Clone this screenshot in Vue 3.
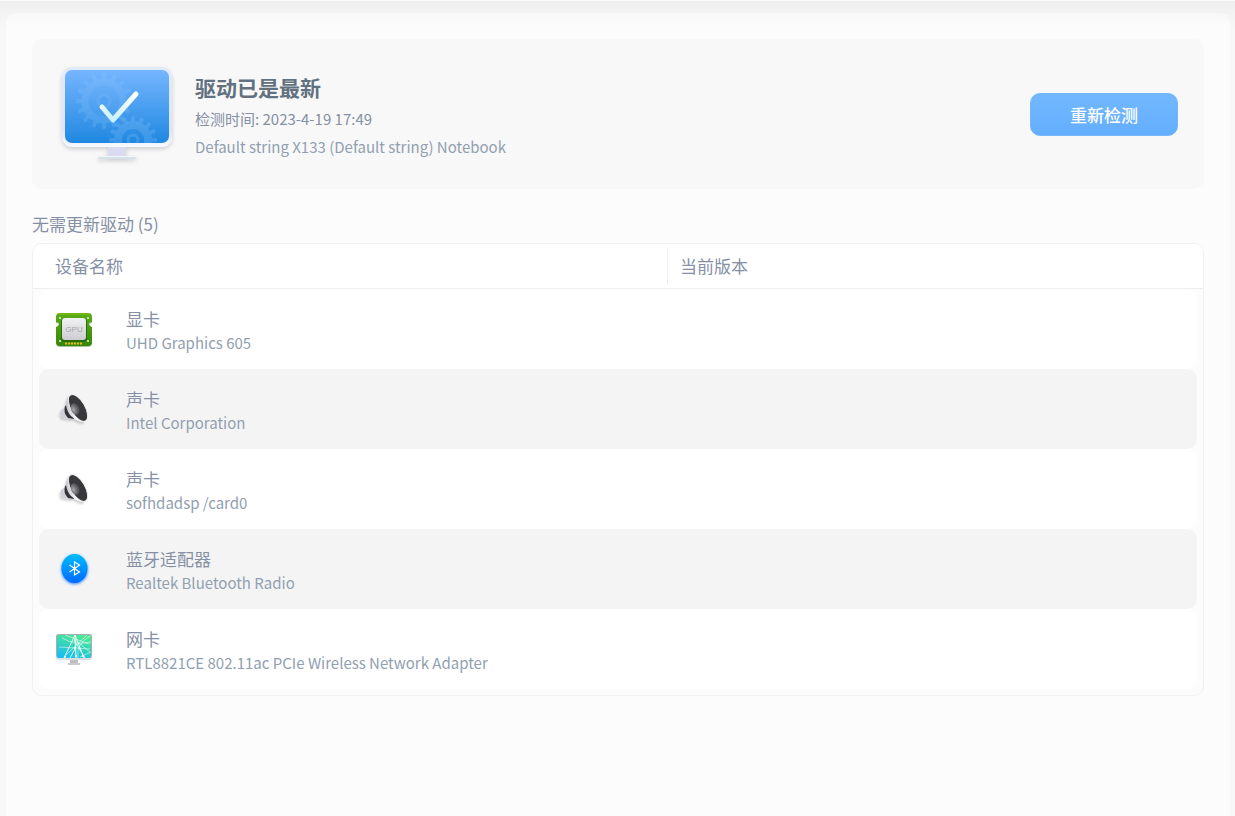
<script setup>
import { ref } from 'vue'

const checkedAt = ref('2023-4-19 17:49')
const computer = 'Default string X133 (Default string) Notebook'

const drivers = [
  { id: 1, icon: 'gpu', type: '显卡', name: 'UHD Graphics 605', version: '' },
  { id: 2, icon: 'audio', type: '声卡', name: 'Intel Corporation', version: '' },
  { id: 3, icon: 'audio', type: '声卡', name: 'sofhdadsp /card0', version: '' },
  { id: 4, icon: 'bluetooth', type: '蓝牙适配器', name: 'Realtek Bluetooth Radio', version: '' },
  {
    id: 5,
    icon: 'network',
    type: '网卡',
    name: 'RTL8821CE 802.11ac PCIe Wireless Network Adapter',
    version: '',
  },
]

const teeth = Array.from({ length: 16 }, (_, i) => i * 22.5)

const checkAgain = () => {
  const now = new Date()
  const minutes = String(now.getMinutes()).padStart(2, '0')
  checkedAt.value = `${now.getFullYear()}-${now.getMonth() + 1}-${now.getDate()} ${now.getHours()}:${minutes}`
}
</script>

<template>
  <div class="window">
    <main class="page">
      <section class="summary">
        <svg class="monitor" viewBox="0 0 124 106" aria-hidden="true">
          <defs>
            <linearGradient id="screen" x1="0" y1="0" x2="0" y2="1">
              <stop offset="0" stop-color="#76b5ff" />
              <stop offset="1" stop-color="#1f88e0" />
            </linearGradient>
            <linearGradient id="frame" x1="0" y1="0" x2="0" y2="1">
              <stop offset="0" stop-color="#e1ebfc" />
              <stop offset="0.8" stop-color="#dce5fc" />
              <stop offset="1" stop-color="#f8faff" />
            </linearGradient>
            <linearGradient id="tick" x1="0" y1="0" x2="0" y2="1">
              <stop offset="0" stop-color="#ffffff" />
              <stop offset="1" stop-color="#c9efff" />
            </linearGradient>
            <filter id="shade" x="-20%" y="-20%" width="140%" height="140%">
              <feDropShadow dx="0" dy="2" stdDeviation="2" flood-color="#000" flood-opacity="0.18" />
            </filter>
            <clipPath id="glass"><rect x="10" y="7" width="104" height="73" rx="7" /></clipPath>
          </defs>
          <g filter="url(#shade)">
            <rect x="53" y="83" width="18" height="12" fill="#d9dcf3" />
            <rect x="43" y="93" width="38" height="3" rx="1" fill="#f2f6fb" />
            <rect x="7" y="4" width="110" height="80" rx="10" fill="url(#frame)" />
          </g>
          <rect x="53" y="84" width="18" height="9" fill="#d9dbf1" />
          <rect x="43" y="94" width="38" height="2" rx="1" fill="#d5e1ea" />
          <rect x="10" y="7" width="104" height="73" rx="7" fill="url(#screen)" />
          <g clip-path="url(#glass)" fill="none" stroke="#9acbff">
            <g transform="translate(49 38)" opacity="0.2">
              <circle r="19" stroke-width="7" />
              <circle r="11" stroke-width="9" opacity="0.4" />
              <circle r="6" stroke-width="3" />
              <rect
                v-for="angle in teeth"
                :key="angle"
                x="-2"
                y="-28"
                width="4"
                height="6"
                rx="1"
                fill="#9acbff"
                stroke="none"
                :transform="`rotate(${angle})`"
              />
            </g>
            <g transform="translate(78 77)" opacity="0.22">
              <circle r="15" stroke-width="8" />
              <circle r="5" stroke-width="3" />
              <rect
                v-for="angle in teeth"
                :key="angle"
                x="-2"
                y="-24"
                width="4"
                height="6"
                rx="1"
                fill="#9acbff"
                stroke="none"
                :transform="`rotate(${angle})`"
              />
            </g>
          </g>
          <path
            d="M47 44 L58 57 L81 31"
            fill="none"
            stroke="url(#tick)"
            stroke-width="5"
            stroke-linecap="round"
            stroke-linejoin="round"
          />
        </svg>

        <div class="details">
          <h1>驱动已是最新</h1>
          <p class="time">检测时间: {{ checkedAt }}</p>
          <p class="computer">{{ computer }}</p>
        </div>

        <button type="button" @click="checkAgain">重新检测</button>
      </section>

      <h2 id="list-title">无需更新驱动 ({{ drivers.length }})</h2>

      <table aria-labelledby="list-title">
        <thead>
          <tr>
            <th scope="col">设备名称</th>
            <th scope="col">当前版本</th>
          </tr>
        </thead>
        <tbody>
          <tr v-for="driver in drivers" :key="driver.id">
            <td class="device">
              <svg v-if="driver.icon === 'gpu'" class="icon" viewBox="0 0 36 36" aria-hidden="true">
                <defs>
                  <linearGradient id="chip" x1="0" y1="0" x2="0" y2="1">
                    <stop offset="0" stop-color="#f2f2f4" />
                    <stop offset="1" stop-color="#cdcdd1" />
                  </linearGradient>
                  <linearGradient id="board" x1="0" y1="0" x2="0" y2="1">
                    <stop offset="0" stop-color="#5aae16" />
                    <stop offset="1" stop-color="#368709" />
                  </linearGradient>
                </defs>
                <path
                  d="M4 3H32Q36 3 36 7V12Q33 12 33 14T36 17V32Q36 36 32 36H4Q0 36 0 32V17Q3 16 3 14T0 12V7Q0 3 4 3Z"
                  fill="#27630c"
                  opacity="0.4"
                />
                <path
                  d="M4 2H32Q36 2 36 6V11Q33 11 33 13T36 16V31Q36 35 32 35H4Q0 35 0 31V16Q3 15 3 13T0 11V6Q0 2 4 2Z"
                  fill="url(#board)"
                />
                <path d="M3 3H33" stroke="#86bd17" />
                <rect x="5" y="7" width="26" height="24" rx="4" fill="#286d0c" />
                <rect x="6" y="7" width="24" height="22" rx="3" fill="url(#chip)" />
                <path d="M9 32.5H27" stroke="#f0bd19" stroke-width="2" stroke-dasharray="2 1" />
                <g fill="#e8f5df">
                  <circle cx="4" cy="7" r="1" />
                  <circle cx="32" cy="7" r="1" />
                  <circle cx="4" cy="30" r="1" />
                  <circle cx="32" cy="30" r="1" />
                </g>
                <text x="18" y="21" text-anchor="middle" class="chip-text">GPU</text>
              </svg>

              <svg v-else-if="driver.icon === 'audio'" class="icon" viewBox="0 0 36 36" aria-hidden="true">
                <defs>
                  <linearGradient :id="`horn-${driver.id}`" x1="0" y1="0" x2="1" y2="0">
                    <stop offset="0" stop-color="#c4c4c9" />
                    <stop offset="0.6" stop-color="#ffffff" />
                    <stop offset="1" stop-color="#d9d9dd" />
                  </linearGradient>
                  <radialGradient :id="`cap-${driver.id}`" cx="0.3" cy="0.5">
                    <stop offset="0" stop-color="#a9a9ad" />
                    <stop offset="1" stop-color="#5a5a5f" />
                  </radialGradient>
                  <filter :id="`drop-${driver.id}`" x="-30%" y="-30%" width="160%" height="160%">
                    <feDropShadow dx="-1" dy="2" stdDeviation="1" flood-color="#000" flood-opacity="0.2" />
                  </filter>
                </defs>
                <g :filter="`url(#drop-${driver.id})`">
                  <path d="M8 17L5 19Q3 24 7 27L16 28L12 17Z" fill="#d0d0d8" />
                  <path d="M9 15Q7 22 12 27L18 28L13 13Z" fill="#343438" />
                  <path
                    d="M13 4Q10 10 10 14Q11 21 15 25Q22 31 29 31L24 12Z"
                    :fill="`url(#horn-${driver.id})`"
                  />
                </g>
                <ellipse
                  cx="22"
                  cy="17"
                  rx="7"
                  ry="15"
                  transform="rotate(-30 22 17)"
                  fill="#38383b"
                  stroke="#f0f0f2"
                />
                <ellipse
                  cx="19"
                  cy="18"
                  rx="4"
                  ry="6"
                  transform="rotate(-24 19 18)"
                  :fill="`url(#cap-${driver.id})`"
                />
              </svg>

              <svg v-else-if="driver.icon === 'bluetooth'" class="icon" viewBox="0 0 36 36" aria-hidden="true">
                <defs>
                  <linearGradient id="blue" x1="0" y1="0" x2="0" y2="1">
                    <stop offset="0" stop-color="#04bdfb" />
                    <stop offset="1" stop-color="#0569ff" />
                  </linearGradient>
                  <filter id="glow" x="-30%" y="-30%" width="160%" height="160%">
                    <feDropShadow dx="0" dy="1" stdDeviation="1.5" flood-color="#0878ff" flood-opacity="0.9" />
                  </filter>
                </defs>
                <ellipse cx="18.5" cy="17.5" rx="13" ry="14.5" fill="url(#blue)" filter="url(#glow)" />
                <path
                  d="M13.5 14L23.500 21L18.500 24V11L23.500 14L13.500 21"
                  fill="none"
                  stroke="#fff"
                  stroke-width="1.200"
                />
              </svg>

              <svg v-else class="icon" viewBox="0 0 36 36" aria-hidden="true">
                <defs>
                  <linearGradient id="net" x1="0.7" y1="0" x2="0.3" y2="1">
                    <stop offset="0" stop-color="#4cea91" />
                    <stop offset="0.5" stop-color="#35d4bd" />
                    <stop offset="1" stop-color="#18bcf2" />
                  </linearGradient>
                  <clipPath id="net-glass"><rect x="1" y="4" width="34" height="23" rx="2" /></clipPath>
                </defs>
                <rect x="14" y="28" width="8" height="5" fill="#bdbdc2" />
                <rect x="12" y="32" width="12" height="2" fill="#cbcbcf" />
                <rect x="0" y="3" width="36" height="26" rx="3" fill="#dedee2" />
                <rect x="0" y="3" width="36" height="24" rx="3" fill="#a6aeb3" />
                <rect x="1" y="4" width="34" height="23" rx="2" fill="url(#net)" />
                <g clip-path="url(#net-glass)" fill="none" stroke="#fff">
                  <path d="M19 4L8 27M19 4L20 27M18 9L29 27M19 4L28 27M20 16L14 27" opacity="0.85" />
                  <path
                    d="M3 16L34 18M6 7Q20 15 35 11M9 4L33 13M31 4L10 24M34 21L18 8M22 27Q20 13 34 5M24 26L35 21"
                    stroke-width="0.8"
                    opacity="0.65"
                  />
                </g>
                <g fill="#fff">
                  <circle cx="19" cy="5" r="1" />
                  <circle cx="19" cy="17" r="1" />
                  <circle cx="9" cy="26" r="1" />
                  <circle cx="20" cy="25" r="1" />
                  <circle cx="27" cy="25" r="1" />
                </g>
              </svg>

              <div class="names">
                <span class="type">{{ driver.type }}</span>
                <span class="name">{{ driver.name }}</span>
              </div>
            </td>
            <td>{{ driver.version }}</td>
          </tr>
        </tbody>
      </table>
    </main>
  </div>
</template>

<style>
body {
  background: #f8f8f8;
}
</style>

<style scoped>
.window {
  box-sizing: border-box;
  min-height: 100vh;
  display: flex;
  padding: 12px 5px 0 6px;
  border-top: 1px solid #fafafa;
  background: linear-gradient(#efefef, #f3f3f3 12px, #f8f8f8 30px);
  color: #8690a5;
  font-family: 'Noto Sans CJK SC', sans-serif;
}

.page {
  flex: 1;
  min-width: 0;
  padding: 26px 26px 40px;
  border-radius: 10px 10px 0 0;
  background: linear-gradient(#f8f8f8, #fcfcfc 14px);
}

.summary {
  display: flex;
  align-items: center;
  box-sizing: border-box;
  min-height: 150px;
  padding: 0 26px 0 23px;
  border-radius: 10px;
  background: #f8f8f8;
}

.monitor {
  flex: none;
  width: 124px;
  height: 106px;
  padding-top: 4px;
}

.details {
  flex: 1;
  padding: 2px 0 0 16px;
}

h1,
h2,
p {
  margin: 0;
}

h1 {
  color: #61717f;
  font-size: 21px;
  font-weight: 700;
  line-height: 36px;
}

p {
  font-size: 15px;
  line-height: 28px;
}

.computer {
  color: #91a0b0;
}

button {
  width: 148px;
  height: 43px;
  padding: 0;
  border: 1px solid #74b5fb;
  border-radius: 10px;
  background: linear-gradient(#72b8ff, #64aeff);
  color: #fff;
  font: inherit;
  font-size: 17px;
  font-weight: 500;
  cursor: pointer;
}

h2 {
  padding: 22px 0 6px;
  font-size: 17px;
  font-weight: 400;
  line-height: 26px;
}

table {
  display: block;
  border: 1px solid #f1f1f1;
  border-radius: 10px;
  overflow: hidden;
}

thead,
tbody {
  display: block;
}

tr {
  display: grid;
  grid-template-columns: 634fr 536fr;
}

thead tr {
  padding: 4px 0;
  border-bottom: 1px solid #eeeeee;
  background: #fff;
}

th {
  padding: 0 12px;
  font-size: 17px;
  font-weight: 400;
  line-height: 36px;
  text-align: left;
}

th:first-child {
  padding-left: 22px;
}

th + th {
  border-left: 1px solid #eeeeee;
}

tbody {
  padding: 0 6px 6px;
}

tbody tr {
  height: 80px;
  border-radius: 10px;
  background: #fff;
}

tbody tr:nth-child(even) {
  background: #f4f4f4;
}

td {
  padding: 0;
}

.device {
  display: flex;
  align-items: center;
  gap: 34px;
  padding-left: 17px;
}

.icon {
  flex: none;
  width: 36px;
  height: 36px;
}

.chip-text {
  fill: #a5a5a9;
  font-family: 'Liberation Sans', sans-serif;
  font-size: 8px;
}

.names {
  display: flex;
  flex-direction: column;
  padding-top: 3px;
  line-height: 24px;
}

.type {
  font-size: 17px;
}

.name {
  color: #91a0b0;
  font-size: 15px;
}
</style>
